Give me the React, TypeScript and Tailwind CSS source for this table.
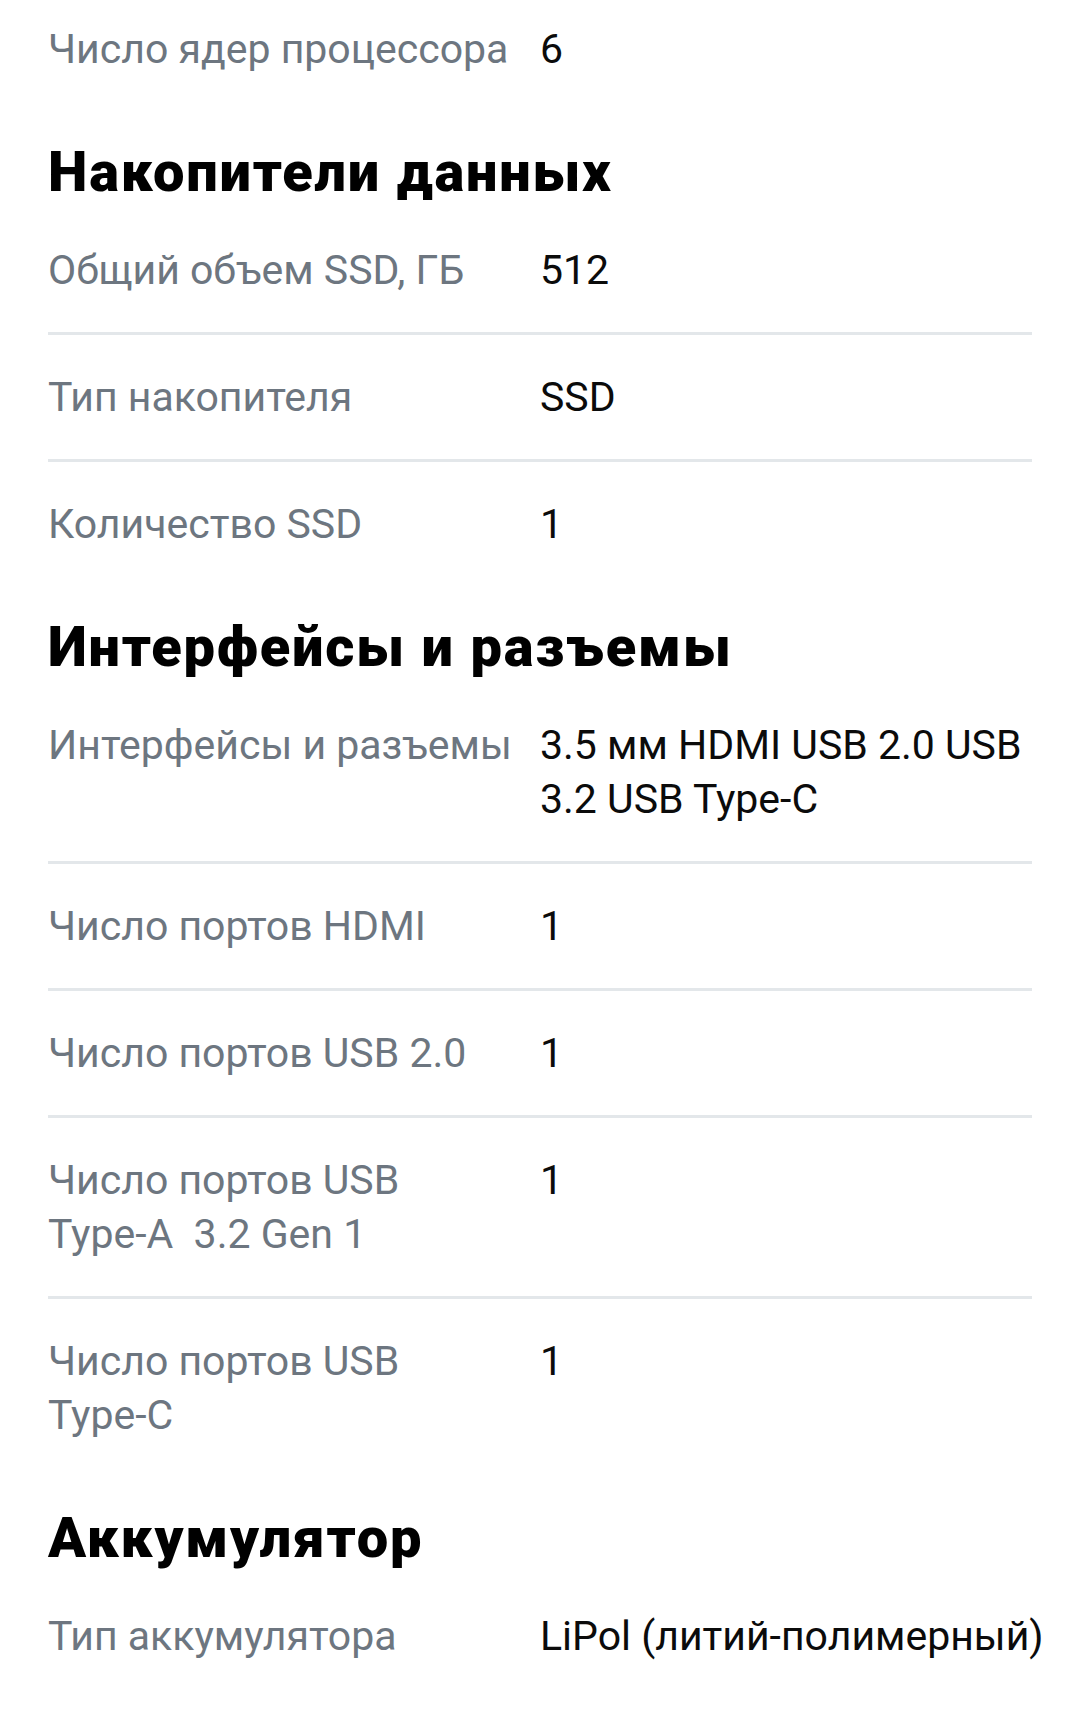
const rowCls =
  'grid grid-cols-2 py-[35px] text-[41px] leading-[54px] whitespace-nowrap';

type Row = { label: React.ReactNode; value: React.ReactNode };

const Spec = ({ label, value, last }: Row & { last?: boolean }) => (
  <div className={last ? rowCls : `${rowCls} border-b-[3px] border-[#e3e7ea]`}>
    <div className="pr-[20px] text-[#6d7680]">{label}</div>
    <div className="text-[#0b0b0b]">{value}</div>
  </div>
);

const Heading = ({ children }: { children: React.ReactNode }) => (
  <h2 className="pt-[29px] pb-[4px] text-[56px] leading-[64px] font-black tracking-[1.8px] text-black">
    {children}
  </h2>
);

export default function App() {
  return (
    <div
      className="h-[1722px] overflow-hidden bg-white px-[48px]"
      style={{ fontFamily: 'Roboto, "Noto Sans", sans-serif' }}
    >
      <div className="grid grid-cols-2 pt-[22px] pb-[35px] text-[41px] leading-[54px] whitespace-nowrap">
        <div className="pr-[20px] text-[#6d7680]">Число ядер процессора</div>
        <div className="text-[#0b0b0b]">6</div>
      </div>

      <Heading>Накопители данных</Heading>
      <Spec label="Общий объем SSD, ГБ" value="512" />
      <Spec label="Тип накопителя" value="SSD" />
      <Spec label="Количество SSD" value="1" last />

      <Heading>Интерфейсы и разъемы</Heading>
      <Spec
        label="Интерфейсы и разъемы"
        value={
          <>
            3.5 мм HDMI USB 2.0 USB
            <br />
            3.2 USB Type-C
          </>
        }
      />
      <Spec label="Число портов HDMI" value="1" />
      <Spec label="Число портов USB 2.0" value="1" />
      <Spec
        label={
          <>
            Число портов USB
            <br />
            Type-A&nbsp; 3.2 Gen 1
          </>
        }
        value="1"
      />
      <Spec
        label={
          <>
            Число портов USB
            <br />
            Type-C
          </>
        }
        value="1"
        last
      />

      <Heading>Аккумулятор</Heading>
      <Spec label="Тип аккумулятора" value="LiPol (литий-полимерный)" last />
    </div>
  );
}
